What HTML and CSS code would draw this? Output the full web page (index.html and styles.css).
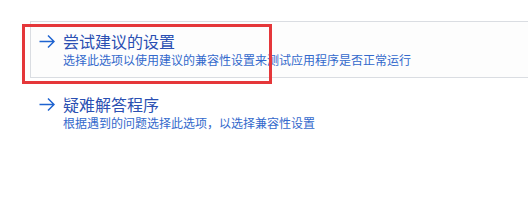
FILE: index.html
```html
<!DOCTYPE html>
<html lang="zh-CN">
<head>
    <meta charset="UTF-8">
    <title>程序兼容性疑难解答</title>
    <link rel="stylesheet" href="styles.css">
</head>
<body>
    <main class="options">
        <div class="option selected">
            <svg class="arrow" width="16" height="20" viewBox="0 0 16 20">
                <path d="M0.5 10.5 H15 M9 4.5 L15 10.5 L9 16.5" fill="none" stroke="currentColor" stroke-width="1.5"/>
            </svg>
            <div class="option-text">
                <div class="option-title">尝试建议的设置</div>
                <div class="option-desc">选择此选项以使用建议的兼容性设置来测试应用程序是否正常运行</div>
            </div>
        </div>
        <div class="option">
            <svg class="arrow" width="16" height="20" viewBox="0 0 16 20">
                <path d="M0.5 10.5 H15 M9 4.5 L15 10.5 L9 16.5" fill="none" stroke="currentColor" stroke-width="1.5"/>
            </svg>
            <div class="option-text">
                <div class="option-title">疑难解答程序</div>
                <div class="option-desc">根据遇到的问题选择此选项，以选择兼容性设置</div>
            </div>
        </div>
        <div class="highlight"></div>
    </main>
</body>
</html>
```
FILE: styles.css
```css
* {
    margin: 0;
    padding: 0;
    box-sizing: border-box;
}

body {
    background-color: #ffffff;
    font-family: "Noto Sans CJK SC", "Noto Sans", sans-serif;
    overflow: hidden;
}

.options {
    position: relative;
    padding: 21px 0 0 30px;
    display: flex;
    flex-direction: column;
    gap: 6px;
}

.option {
    display: flex;
    gap: 8px;
    padding: 9px 8px 8px 8px;
    border: 1px solid transparent;
    margin-right: -2px;
}

.option.selected {
    border-color: #dadde2;
    background-color: #fdfdfd;
}

.arrow {
    color: #1e63d0;
    flex-shrink: 0;
}

.option-title {
    font-size: 16px;
    line-height: 20px;
    color: #2a4fb2;
}

.option-desc {
    font-size: 12px;
    line-height: 18px;
    color: #3369cc;
}

.highlight {
    position: absolute;
    left: 22px;
    top: 24px;
    width: 250px;
    height: 60px;
    border: 3px solid #e5373a;
}
```
